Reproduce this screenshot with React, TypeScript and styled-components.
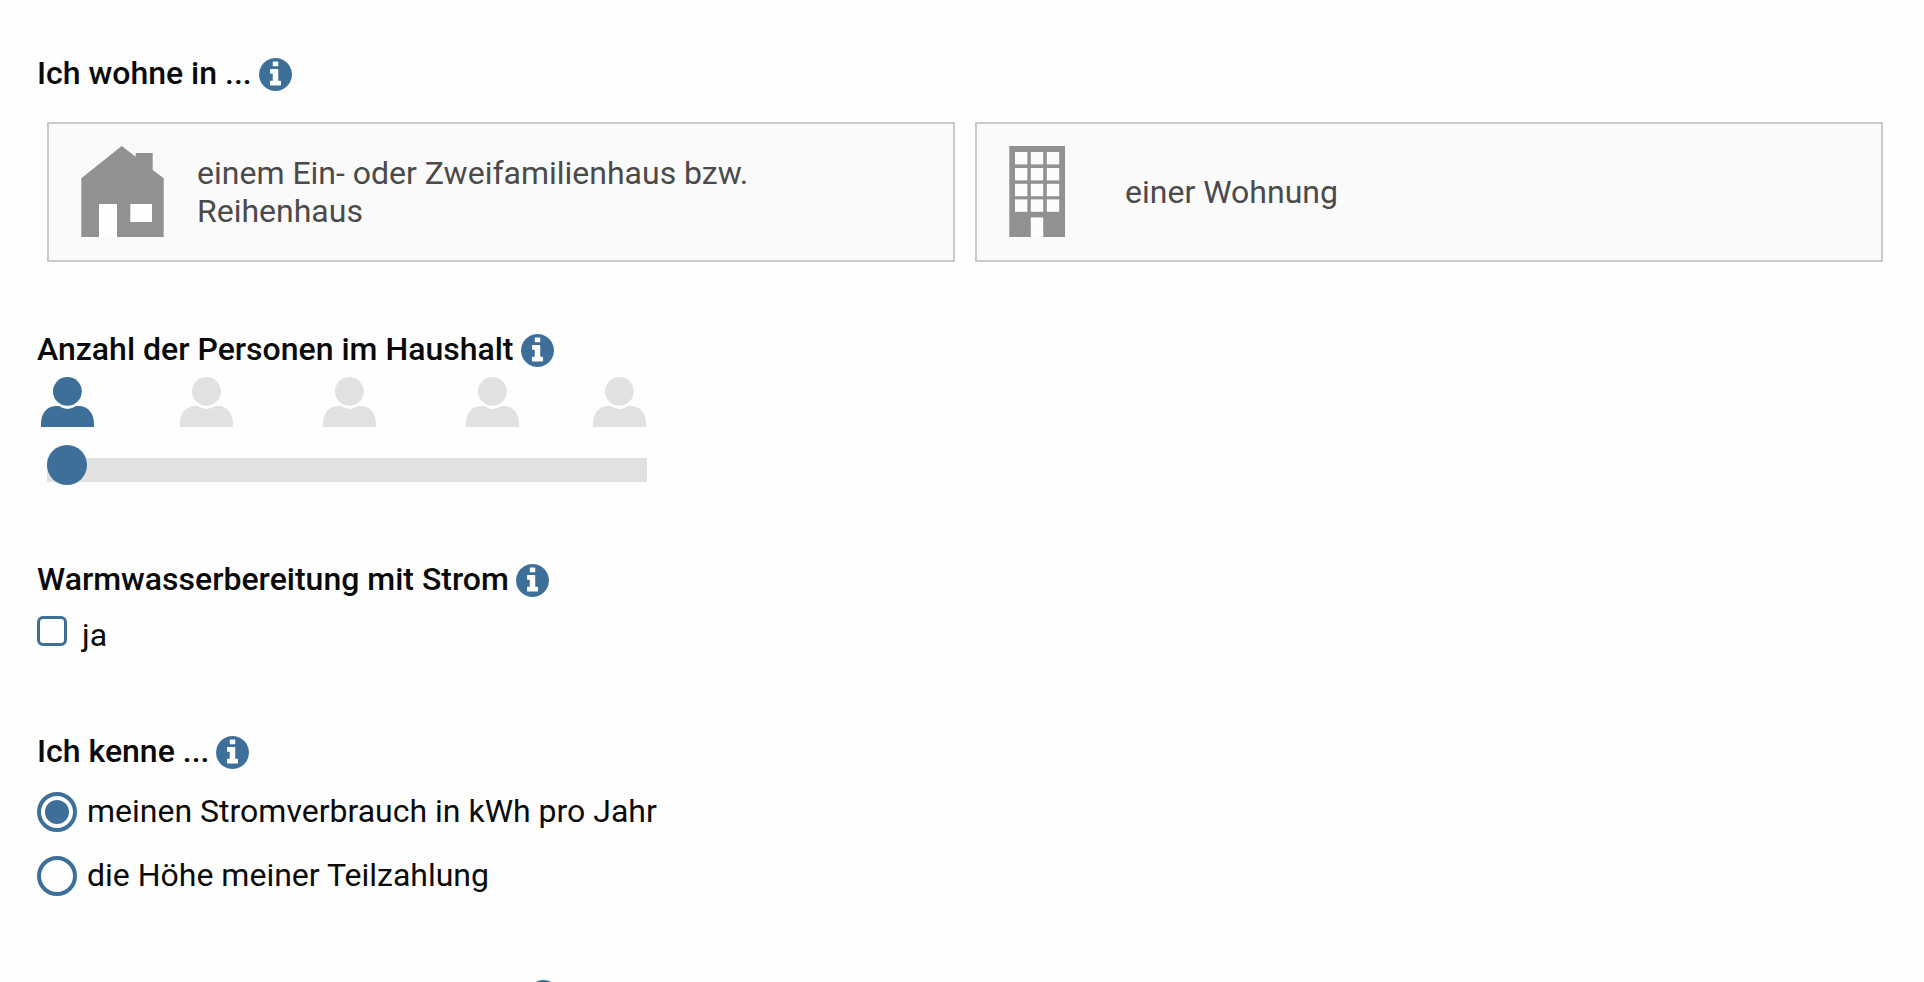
import React, { useState } from "react";
import styled, { createGlobalStyle } from "styled-components";

const blue = "#3d6f99";
const grey = "#e1e1e1";

const GlobalStyle = createGlobalStyle`
  *, *::before, *::after { box-sizing: border-box; }
  html { scrollbar-width: none; }
  body {
    margin: 0;
    background: #fefefe;
    color: #0a0a0a;
    font-family: Roboto, "Liberation Sans", sans-serif;
    font-size: 32px;
    line-height: 38px;
  }
`;

const Form = styled.form`
  display: flex;
  flex-direction: column;
  padding: 54px 31px 0 37px;
`;

const Section = styled.section<{ $gap: number; $after: number }>`
  display: flex;
  flex-direction: column;
  gap: ${(p) => p.$gap}px;
  padding-bottom: ${(p) => p.$after}px;
`;

const HeadingRow = styled.div`
  display: flex;
  align-items: flex-start;
  gap: 7px;
`;

const Heading = styled.h2`
  margin: 0;
  font-size: 32px;
  line-height: 38px;
  font-weight: 500;
`;

const InfoButton = styled.button`
  display: block;
  margin: 4px 0 0;
  padding: 0;
  border: 0;
  background: none;
  color: ${blue};
  cursor: pointer;

  svg {
    display: block;
    width: 33px;
    height: 33px;
  }
`;

const Cards = styled.div`
  display: grid;
  grid-template-columns: 1fr 1fr;
  gap: 20px;
  padding: 0 10px;
`;

const Card = styled.button`
  display: grid;
  grid-template-columns: 116px 1fr;
  align-items: center;
  min-height: 140px;
  padding: 22px 48px 22px 32px;
  border: 2px solid #cbcbcb;
  background: #fafafa;
  color: #4a4a4a;
  font: inherit;
  text-align: left;
  cursor: pointer;

  svg {
    display: block;
  }
`;

const People = styled.div`
  display: grid;
  grid-template-columns: 139px 143px 143px 127px 53px;
  padding: 0 4px;
`;

const PersonSvg = styled.svg<{ $active: boolean }>`
  display: block;
  width: 53px;
  height: 50px;
  fill: ${(p) => (p.$active ? blue : grey)};
`;

const Household = styled.div`
  display: flex;
  flex-direction: column;
  gap: 18px;
`;

const Slider = styled.input`
  appearance: none;
  display: block;
  width: 600px;
  max-width: 100%;
  height: 40px;
  margin: 0 10px;
  background: linear-gradient(${grey}, ${grey}) 0 13px / 100% 24px no-repeat;
  cursor: pointer;

  &::-webkit-slider-thumb {
    appearance: none;
    width: 40px;
    height: 40px;
    border: 0;
    border-radius: 50%;
    background: ${blue};
  }
`;

const Options = styled.div`
  display: flex;
  flex-direction: column;
  align-items: flex-start;
  gap: 24px;
`;

const Option = styled.label<{ $gap: number }>`
  display: flex;
  align-items: flex-start;
  gap: ${(p) => p.$gap}px;
  cursor: pointer;
`;

const Checkbox = styled.input`
  appearance: none;
  width: 30px;
  height: 30px;
  margin: 0;
  border: 3px solid ${blue};
  border-radius: 6px;

  &:checked {
    background: ${blue};
  }
`;

const Radio = styled.input`
  appearance: none;
  display: grid;
  place-items: center;
  width: 40px;
  height: 40px;
  margin: 0;
  border: 4px solid ${blue};
  border-radius: 50%;

  &:checked::before {
    content: "";
    width: 24px;
    height: 24px;
    border-radius: 50%;
    background: ${blue};
  }
`;

function Title({ id, children }: { id: string; children: string }) {
  return (
    <HeadingRow>
      <Heading id={id}>{children}</Heading>
      <InfoButton type="button" aria-describedby={id}>
        <svg viewBox="128 128 1536 1536" fill="currentColor" aria-hidden="true">
          <path d="M1152 1376v-160q0-14-9-23t-23-9h-96v-512q0-14-9-23t-23-9h-320q-14 0-23 9t-9 23v160q0 14 9 23t23 9h96v320h-96q-14 0-23 9t-9 23v160q0 14 9 23t23 9h448q14 0 23-9t9-23zm-128-896v-160q0-14-9-23t-23-9h-192q-14 0-23 9t-9 23v160q0 14 9 23t23 9h192q14 0 23-9t9-23zm640 416q0 209-103 385.5t-279.5 279.5-385.5 103-385.5-103-279.5-279.5-103-385.5 103-385.5 279.5-279.5 385.5-103 385.5 103 279.5 279.5 103 385.5z" />
        </svg>
      </InfoButton>
    </HeadingRow>
  );
}

function HouseIcon() {
  return (
    <svg width="83" height="92" viewBox="0 0 83 92" aria-hidden="true">
      <path fill="#fefefe" d="M18 58h18v33H18zM49 58h22v18H49z" />
      <path
        fill="#919191"
        fillRule="evenodd"
        d="M40.7 0 54.7 10.7V7h17v17l11 8.2V91H36V58H18v33H0.3V32.2zM49.3 58v18H71V58z"
      />
    </svg>
  );
}

function FlatsIcon() {
  const columns = [6, 21.8, 37.8];
  const rows = [6, 22, 37.8, 53.4];
  return (
    <svg width="56" height="92" viewBox="0 0 56 92" aria-hidden="true">
      <path fill="#919191" d="M0.3 0H56v91H0.3z" />
      <g fill="#fcfcfc">
        {rows.map((y) =>
          columns.map((x) => <rect key={`${x}-${y}`} x={x} y={y} width="12.4" height="12.4" />)
        )}
        <path d="M21.8 71.4h12.4V91H21.8z" />
      </g>
    </svg>
  );
}

function Person({ active }: { active: boolean }) {
  return (
    <PersonSvg $active={active} viewBox="0 0 53 50" aria-hidden="true">
      <circle cx="26.4" cy="14.4" r="14.4" />
      <path d="M0 50V47C0 36 6 29 15.5 29H18Q26.5 35 35 29H37.5C47 29 53 36 53 47V50Z" />
    </PersonSvg>
  );
}

export default function App() {
  const [persons, setPersons] = useState(1);
  const [known, setKnown] = useState("usage");

  return (
    <>
      <GlobalStyle />
      <Form>
        <Section $gap={30} $after={68} aria-labelledby="home">
          <Title id="home">Ich wohne in ...</Title>
          <Cards>
            <Card type="button">
              <HouseIcon />
              <span>einem Ein- oder Zweifamilienhaus bzw. Reihenhaus</span>
            </Card>
            <Card type="button">
              <FlatsIcon />
              <span>einer Wohnung</span>
            </Card>
          </Cards>
        </Section>

        <Section $gap={9} $after={75} aria-labelledby="persons">
          <Title id="persons">Anzahl der Personen im Haushalt</Title>
          <Household>
            <People>
              {[1, 2, 3, 4, 5].map((n) => (
                <Person key={n} active={n <= persons} />
              ))}
            </People>
            <Slider
              type="range"
              min={1}
              max={5}
              value={persons}
              aria-labelledby="persons"
              onChange={(e) => setPersons(Number(e.target.value))}
            />
          </Household>
        </Section>

        <Section $gap={18} $after={78} aria-labelledby="water">
          <Title id="water">Warmwasserbereitung mit Strom</Title>
          <Options>
            <Option $gap={15}>
              <Checkbox type="checkbox" />
              <span>ja</span>
            </Option>
          </Options>
        </Section>

        <Section $gap={22} $after={80} aria-labelledby="known">
          <Title id="known">Ich kenne ...</Title>
          <Options role="radiogroup" aria-labelledby="known">
            <Option $gap={10}>
              <Radio
                type="radio"
                name="known"
                checked={known === "usage"}
                onChange={() => setKnown("usage")}
              />
              <span>meinen Stromverbrauch in kWh pro Jahr</span>
            </Option>
            <Option $gap={10}>
              <Radio
                type="radio"
                name="known"
                checked={known === "payment"}
                onChange={() => setKnown("payment")}
              />
              <span>die Höhe meiner Teilzahlung</span>
            </Option>
          </Options>
        </Section>

        <Section $gap={22} $after={80} aria-labelledby="usage">
          <Title id="usage">Stromverbrauch in kWh pro Jahr *</Title>
        </Section>
      </Form>
    </>
  );
}
